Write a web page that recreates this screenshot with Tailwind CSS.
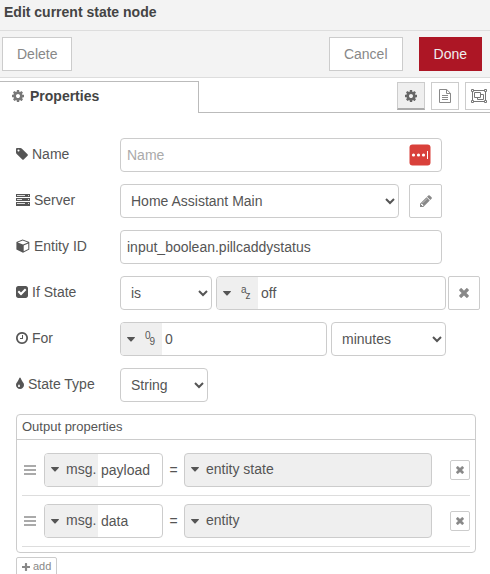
<!DOCTYPE html>
<html lang="en">
<head>
<meta charset="utf-8">
<meta name="viewport" content="width=device-width, initial-scale=1">
<title>Edit current state node</title>
<script src="https://cdn.jsdelivr.net/npm/@tailwindcss/browser@4"></script>
</head>
<body class="flex h-screen flex-col overflow-hidden bg-white font-['Liberation_Sans',Arial,sans-serif] text-sm text-[#555]">
<svg class="hidden" aria-hidden="true">
  <symbol id="cog" viewBox="128 128 1536 1536"><path d="M1152 896q0-106-75-181t-181-75-181 75-75 181 75 181 181 75 181-75 75-181zm512-109v222q0 12-8 23t-20 13l-185 28q-19 54-39 91 35 50 107 138 10 12 10 25t-9 23q-27 37-99 108t-94 71q-12 0-26-9l-138-108q-44 23-91 38-16 136-29 186-7 28-36 28h-222q-14 0-24.5-8.5t-11.5-21.5l-28-184q-49-16-90-37l-141 107q-10 9-25 9-14 0-25-11-126-114-165-168-7-10-7-23 0-12 8-23 15-21 51-66.5t54-70.5q-27-50-41-99l-183-27q-13-2-21-12.5t-8-23.5v-222q0-12 8-23t19-13l186-28q14-46 39-92-40-57-107-138-10-12-10-24 0-10 9-23 26-36 98.5-107.5t94.5-71.5q13 0 26 10l138 107q44-23 91-38 16-136 29-186 7-28 36-28h222q14 0 24.5 8.5t11.5 21.5l28 184q49 16 90 37l142-107q9-9 24-9 13 0 25 10 129 119 165 170 7 8 7 22 0 12-8 23-15 21-51 66.5t-54 70.5q26 50 41 98l183 28q13 2 21 12.5t8 23.5z"/></symbol>
  <symbol id="times" viewBox="256 384 1280 1280"><path transform="translate(0 64)" d="M1490 1322q0 40-28 68l-136 136q-28 28-68 28t-68-28l-294-294-294 294q-28 28-68 28t-68-28l-136-136q-28-28-28-68t28-68l294-294-294-294q-28-28-28-68t28-68l136-136q28-28 68-28t68 28l294 294 294-294q28-28 68-28t68 28l136 136q28 28 28 68t-28 68l-294 294 294 294q28 28 28 68z" stroke="#888" stroke-width="70"/></symbol>
  <symbol id="caret" viewBox="0 0 8 5"><path d="M.5 0h7q.8.2.3.8L4.4 4.4q-.4.4-.8 0L.2.8Q-.3.2.5 0z"/></symbol>
  <symbol id="bars" viewBox="0 0 12 12"><path d="M0 1h12v2H0zM0 5h12v2H0zM0 9h12v2H0z"/></symbol>
</svg>

<header class="shrink-0 border-b border-[#ddd] bg-[#f3f3f3] px-1 pt-1 pb-[10px]">
  <h1 class="leading-4 font-bold text-[#444]">Edit current state node</h1>
</header>
<div class="flex shrink-0 items-center border-b border-[#ddd] bg-[#f3f3f3] py-[6px] pr-2 pl-[2px]">
  <button type="button" class="h-[34px] border border-[#ccc] bg-white px-[14px] text-[#888]">Delete</button>
  <button type="button" class="ml-auto h-[34px] border border-[#ccc] bg-white px-[14px] text-[#888]">Cancel</button>
  <button type="button" class="ml-4 h-[34px] border border-[#ad1625] bg-[#ad1625] px-[14px] text-[#eee]">Done</button>
</div>

<nav class="flex h-[35px] shrink-0 overflow-hidden pt-[3px]" aria-label="Sections">
  <a href="#properties" class="flex w-[199px] shrink-0 items-center gap-[6px] border-t border-r border-[#bbb] pb-1 pl-3 font-bold text-[#444]">
    <svg class="size-3 fill-[#777]"><use href="#cog"/></svg>Properties
  </a>
  <div class="flex flex-1 justify-end border-b border-[#bbb] pt-px">
    <div class="-mr-[3px] flex gap-[6px]">
      <button type="button" aria-label="Properties" class="flex size-7 items-center justify-center border border-b-2 border-[#ccc] border-b-[#aaa] bg-[#efefef]"><svg class="size-3 fill-[#666]"><use href="#cog"/></svg></button>
      <button type="button" aria-label="Description" class="flex size-7 items-center justify-center border border-[#ccc] bg-white">
        <svg class="h-[14px] w-3 fill-none stroke-[#888]" viewBox="0 0 12 14"><path d="M.5.5h7.2l3.8 3.8v9.2H.5zM7.5.5v4h4M3 6.500h6M3 8.500h6M3 10.500h6"/></svg>
      </button>
      <button type="button" aria-label="Appearance" class="flex size-7 items-center justify-center border border-[#ccc] bg-white">
        <svg class="h-[14px] w-4 fill-none stroke-[#777]" viewBox="0 0 16 14"><path d="M2.500 1.500h11M2.500 12.500h11M1.500 2.500v9M14.500 2.500v9M.5.5h2v2h-2zM13.500.5h2v2h-2zM.5 11.500h2v2h-2zM13.500 11.500h2v2h-2zM3.500 3.500h6v5h-6zM9.500 5.500h3v5h-6v-2"/></svg>
      </button>
    </div>
  </div>
</nav>

<form id="properties" class="min-h-0 flex-1 overflow-hidden pt-[25px] pr-[10px] pl-4" onsubmit="return false">
  <div class="flex flex-col gap-3">
    <div class="flex items-center pr-[38px]">
      <label for="name" class="flex w-[104px] shrink-0 items-center gap-1 pb-[2px]">
        <svg class="h-[14px] w-3 fill-[#555]" viewBox="128 0 1536 1792"><path d="M576 448q0-53-37.500-90.500t-90.500-37.500-90.500 37.500-37.500 90.500 37.500 90.500 90.500 37.500 90.500-37.500 37.500-90.500zm1067 576q0 53-37 90l-491 492q-39 37-91 37-53 0-90-37l-715-716q-38-37-64.500-101t-26.500-117v-416q0-52 38-90t90-38h416q53 0 117 26.500t102 64.500l715 714q37 39 37 91z"/></svg>Name
      </label>
      <div class="flex h-[34px] min-w-0 flex-1 items-center rounded-[4px] border border-[#ccc] pr-[10px] pl-[6px]">
        <input id="name" type="text" placeholder="Name" class="min-w-0 flex-1 outline-none placeholder:text-[#aaa]">
        <button type="button" aria-label="Fill from password manager"><svg class="block size-[22px]" viewBox="0 0 22 22"><rect x=".5" y=".5" width="21" height="21" rx="3" fill="#d9403a"/><g fill="#fff"><circle cx="4.500" cy="11" r="1.600"/><circle cx="9.500" cy="11" r="1.600"/><circle cx="14.500" cy="11" r="1.600"/><path d="M18 7h1v8h-1z"/></g></svg></button>
      </div>
    </div>

    <div class="flex items-center pr-[38px]">
      <label for="server" class="flex w-[104px] shrink-0 items-center gap-1 pb-[2px]">
        <svg class="h-3 w-[14px]" viewBox="0 0 14 12"><path fill="#555" d="M0 0h14v3H0zM0 4h14v3H0zM0 8h14v4H0z"/><path stroke="#ddd" d="M1 1.500h8M1 5.500h5M1 9.500h8M12 1.500h1M12 5.500h1M12 9.500h1"/></svg>Server
      </label>
      <select id="server" class="h-[34px] min-w-0 flex-1 rounded-[4px] border border-[#ccc] bg-white px-[6px]"><option>Home Assistant Main</option></select>
      <button type="button" aria-label="Edit server" class="ml-[10px] flex h-[34px] w-[33px] shrink-0 items-center justify-center rounded-[2px] border border-[#ccc] bg-white">
        <svg class="size-[14px] fill-[#888]" viewBox="0 0 1792 1792"><path d="M491 1536l91-91-235-235-91 91v107h128v128h107zm523-928q0-22-22-22-10 0-17 7l-542 542q-7 7-7 17 0 22 22 22 10 0 17-7l542-542q7-7 7-17zm-54-192l416 416-832 832h-416v-416zm683 96q0 53-37 90l-166 166-416-416 166-165q36-38 90-38 53 0 91 38l235 234q37 39 37 91z"/></svg>
      </button>
    </div>

    <div class="flex items-center pr-[38px]">
      <label for="entity" class="flex w-[104px] shrink-0 items-center gap-1 pb-[2px]">
        <svg class="h-[14px] w-[14px]" viewBox="0 0 14 14"><path fill="#555" d="M6.600.6 13.300 3v7.500L7 13.800.400 10.500V3z"/><path fill="#fff" d="M6.700 1.600 12 3.500 7 5.500 1.700 3.500zM7.700 6.500l4.600-1.900v5.300l-4.600 2.400z"/></svg>Entity ID
      </label>
      <input id="entity" type="text" value="input_boolean.pillcaddystatus" class="h-[34px] min-w-0 flex-1 rounded-[4px] border border-[#ccc] px-[6px]">
    </div>

    <div class="flex items-center">
      <label for="state" class="flex w-[104px] shrink-0 items-center gap-1 pb-[2px]">
        <svg class="h-[14px] w-3 fill-[#555]" viewBox="128 0 1536 1792"><path d="M813 1299l614-614q19-19 19-45t-19-45l-102-102q-19-19-45-19t-45 19l-467 467-211-211q-19-19-45-19t-45 19l-102 102q-19 19-19 45t19 45l358 358q19 19 45 19t45-19zm851-883v960q0 119-84.500 203.500t-203.500 84.500h-960q-119 0-203.500-84.500t-84.500-203.500v-960q0-119 84.500-203.500t203.500-84.500h960q119 0 203.500 84.500t84.500 203.500z"/></svg>If State
      </label>
      <select id="state" class="h-[34px] w-[92px] shrink-0 rounded-[4px] border border-[#ccc] bg-white px-[6px]"><option>is</option></select>
      <div class="ml-1 flex h-[34px] min-w-0 flex-1 overflow-hidden rounded-[4px] border border-[#ccc]">
        <button type="button" aria-label="Value type: string" class="flex w-[41px] shrink-0 items-center bg-[#efefef] pl-[6px]">
          <svg class="h-[5px] w-2 fill-[#555]"><use href="#caret"/></svg>
          <span class="ml-[10px] flex text-[10px] leading-3"><span class="pb-[6px]">a</span><span class="-ml-px pt-[6px]">z</span></span>
        </button>
        <input type="text" aria-label="State value" value="off" class="min-w-0 flex-1 px-[3px]">
      </div>
      <button type="button" aria-label="Clear" class="ml-[2px] flex h-[34px] w-8 shrink-0 items-center justify-center rounded-[2px] border border-[#ccc] bg-white"><svg class="size-[10px] fill-[#888]"><use href="#times"/></svg></button>
    </div>

    <div class="flex items-center pr-[34px]">
      <label for="for" class="flex w-[104px] shrink-0 items-center gap-1 pb-[2px]">
        <svg class="h-[14px] w-3 fill-[#555]" viewBox="128 0 1536 1792"><path d="M1024 544v448q0 14-9 23t-23 9h-320q-14 0-23-9t-9-23v-64q0-14 9-23t23-9h224v-352q0-14 9-23t23-9h64q14 0 23 9t9 23zm416 352q0-148-73-273t-198-198-273-73-273 73-198 198-73 273 73 273 198 198 273 73 273-73 198-198 73-273zm224 0q0 209-103 385.500t-279.500 279.500-385.500 103-385.500-103-279.500-279.500-103-385.500 103-385.500 279.500-279.500 385.500-103 385.500 103 279.500 279.500 103 385.500z"/></svg>For
      </label>
      <div class="flex h-[34px] min-w-0 flex-1 overflow-hidden rounded-[4px] border border-[#ccc]">
        <button type="button" aria-label="Value type: number" class="flex w-[41px] shrink-0 items-center bg-[#efefef] pl-[6px]">
          <svg class="h-[5px] w-2 fill-[#555]"><use href="#caret"/></svg>
          <span class="ml-[10px] flex text-[10px] leading-3"><span class="pb-[6px]">0</span><span class="-ml-px pt-[6px]">9</span></span>
        </button>
        <input id="for" type="text" value="0" class="min-w-0 flex-1 px-[3px]">
      </div>
      <select aria-label="Unit" class="ml-1 h-[34px] w-[115px] shrink-0 rounded-[4px] border border-[#ccc] bg-white px-[6px]"><option>minutes</option></select>
    </div>

    <div class="flex items-center">
      <label for="type" class="flex w-[104px] shrink-0 items-center gap-1 pb-[2px]">
        <svg class="h-[14px] w-2 fill-[#555]" viewBox="384 0 1024 1792"><path d="M896 1152q0-36-20-69-1-1-15.500-22.500t-25.500-38-25-44-21-50.500q-4-16-21-16t-21 16q-7 23-21 50.500t-25 44-25.500 38-15.500 22.500q-20 33-20 69 0 53 37.500 90.500t90.500 37.500 90.500-37.500 37.500-90.500zm512-128q0 212-150 362t-362 150-362-150-150-362q0-145 81-275 6-9 62.500-90.500t101-151 99.500-178 83-201.500q9-30 34-47t51-17 51.500 17 33.500 47q28 93 83 201.500t99.500 178 101 151 62.500 90.500q81 127 81 275z"/></svg>State Type
      </label>
      <select id="type" class="h-[34px] w-[88px] rounded-[4px] border border-[#ccc] bg-white px-[6px]"><option>String</option></select>
    </div>
  </div>

  <section class="mt-3 mr-1 rounded-[4px] border border-[#ccc] pb-[5px]" aria-labelledby="out">
    <h2 id="out" class="border-b border-[#ccc] px-[5px] py-1 text-[13px] leading-4">Output properties</h2>
    <ul class="px-[5px] pt-1">
      <li class="flex h-[52px] items-center border-b border-[#ddd] pl-[2px]">
        <svg class="size-3 shrink-0 fill-[#aaa]"><use href="#bars"/></svg>
        <div class="ml-2 flex h-[34px] w-[119px] shrink-0 overflow-hidden rounded-[4px] border border-[#ccc]">
          <button type="button" class="flex w-[53px] shrink-0 items-center gap-[7px] bg-[#efefef] pl-[6px]"><svg class="h-[5px] w-2 fill-[#555]"><use href="#caret"/></svg><span class="pb-[2px]">msg.</span></button>
          <input type="text" aria-label="Message property" value="payload" class="min-w-0 flex-1 px-[3px]">
        </div>
        <span class="w-[21px] shrink-0 text-center">=</span>
        <button type="button" class="flex h-[34px] min-w-0 flex-1 items-center gap-[7px] rounded-[4px] border border-[#ccc] bg-[#efefef] pl-[6px]"><svg class="h-[5px] w-2 fill-[#555]"><use href="#caret"/></svg><span class="pb-[2px]">entity state</span></button>
        <button type="button" aria-label="Remove payload" class="ml-[18px] flex size-5 shrink-0 items-center justify-center rounded-[2px] border border-[#ccc] bg-white"><svg class="size-2 fill-[#888]"><use href="#times"/></svg></button>
      </li>
      <li class="flex h-[51px] items-center border-b border-[#ddd] pl-[2px]">
        <svg class="size-3 shrink-0 fill-[#aaa]"><use href="#bars"/></svg>
        <div class="ml-2 flex h-[34px] w-[119px] shrink-0 overflow-hidden rounded-[4px] border border-[#ccc]">
          <button type="button" class="flex w-[53px] shrink-0 items-center gap-[7px] bg-[#efefef] pl-[6px]"><svg class="h-[5px] w-2 fill-[#555]"><use href="#caret"/></svg><span class="pb-[2px]">msg.</span></button>
          <input type="text" aria-label="Message property" value="data" class="min-w-0 flex-1 px-[3px]">
        </div>
        <span class="w-[21px] shrink-0 text-center">=</span>
        <button type="button" class="flex h-[34px] min-w-0 flex-1 items-center gap-[7px] rounded-[4px] border border-[#ccc] bg-[#efefef] pl-[6px]"><svg class="h-[5px] w-2 fill-[#555]"><use href="#caret"/></svg><span class="pb-[2px]">entity</span></button>
        <button type="button" aria-label="Remove data" class="ml-[18px] flex size-5 shrink-0 items-center justify-center rounded-[2px] border border-[#ccc] bg-white"><svg class="size-2 fill-[#888]"><use href="#times"/></svg></button>
      </li>
    </ul>
  </section>
  <button type="button" class="mt-1 flex h-5 items-center gap-[3px] rounded-[2px] border border-[#ccc] bg-white px-[5px] text-[11px] text-[#888]">
    <svg class="size-2 fill-[#888]" viewBox="192 128 1408 1408"><path d="M1600 736v192q0 40-28 68t-68 28h-416v416q0 40-28 68t-68 28h-192q-40 0-68-28t-28-68v-416h-416q-40 0-68-28t-28-68v-192q0-40 28-68t68-28h416v-416q0-40 28-68t68-28h192q40 0 68 28t28 68v416h416q40 0 68 28t28 68z"/></svg>add
  </button>
</form>
</body>
</html>
